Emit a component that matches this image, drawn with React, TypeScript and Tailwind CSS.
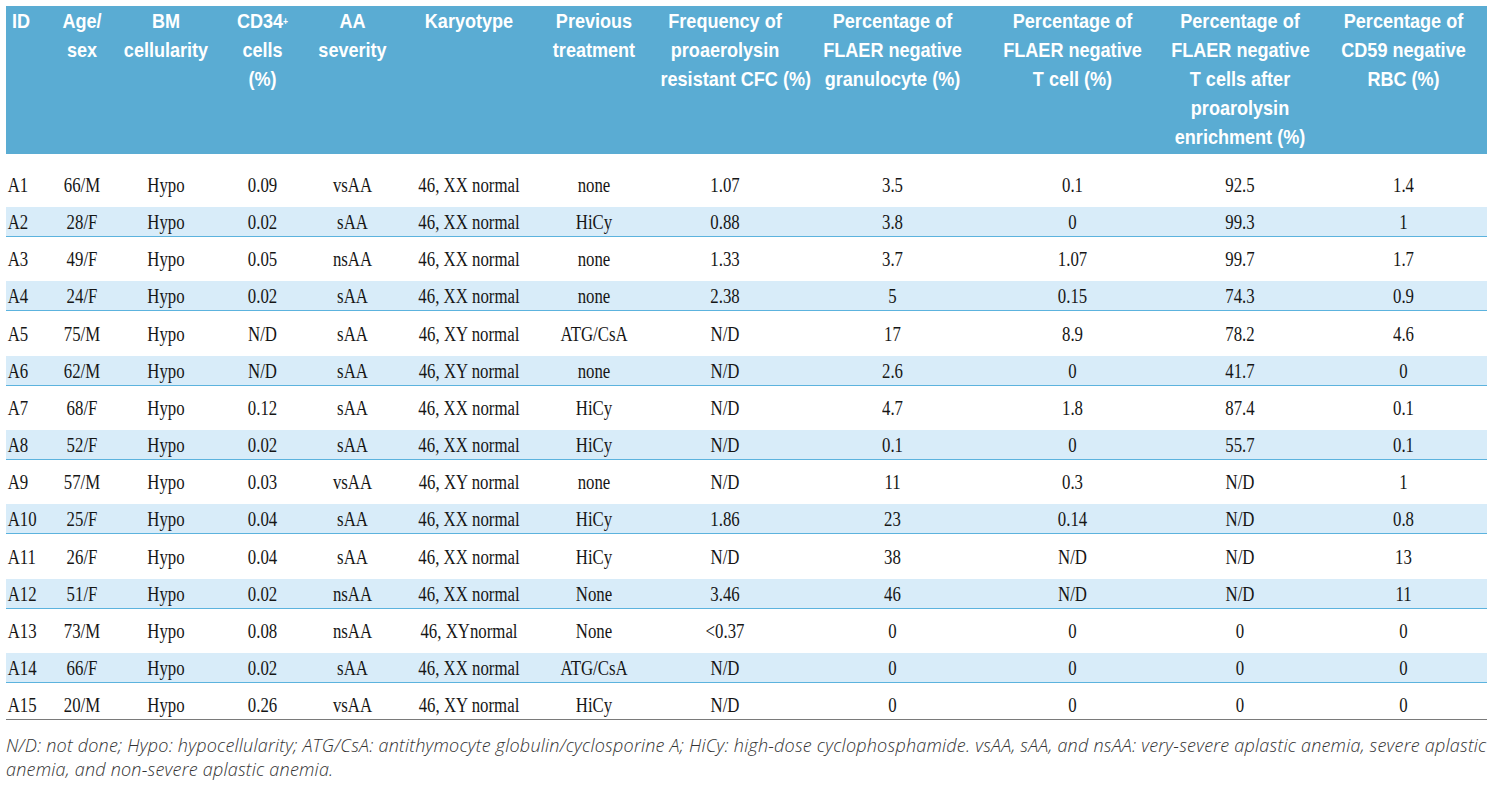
import React from 'react';

const cols = 'grid grid-cols-[46px_60px_108px_85px_95px_138px_112px_150px_185px_175px_160px_167px]';

const headers: React.ReactNode[] = [
  <>ID</>,
  <>Age/<br />sex</>,
  <>BM<br />cellularity</>,
  <>CD34<sup className="text-[10px] relative -top-[3px]">+</sup><br />cells<br />(%)</>,
  <>AA<br />severity</>,
  <>Karyotype</>,
  <>Previous<br />treatment</>,
  <>Frequency of<br />proaerolysin<br />resistant CFC (%)</>,
  <>Percentage of<br />FLAER negative<br />granulocyte (%)</>,
  <>Percentage of<br />FLAER negative<br />T cell (%)</>,
  <>Percentage of<br />FLAER negative<br />T cells after<br />proarolysin<br />enrichment (%)</>,
  <>Percentage of<br />CD59 negative<br />RBC (%)</>,
];

const rows: string[][] = [
  ['A1', '66/M', 'Hypo', '0.09', 'vsAA', '46, XX normal', 'none', '1.07', '3.5', '0.1', '92.5', '1.4'],
  ['A2', '28/F', 'Hypo', '0.02', 'sAA', '46, XX normal', 'HiCy', '0.88', '3.8', '0', '99.3', '1'],
  ['A3', '49/F', 'Hypo', '0.05', 'nsAA', '46, XX normal', 'none', '1.33', '3.7', '1.07', '99.7', '1.7'],
  ['A4', '24/F', 'Hypo', '0.02', 'sAA', '46, XX normal', 'none', '2.38', '5', '0.15', '74.3', '0.9'],
  ['A5', '75/M', 'Hypo', 'N/D', 'sAA', '46, XY normal', 'ATG/CsA', 'N/D', '17', '8.9', '78.2', '4.6'],
  ['A6', '62/M', 'Hypo', 'N/D', 'sAA', '46, XY normal', 'none', 'N/D', '2.6', '0', '41.7', '0'],
  ['A7', '68/F', 'Hypo', '0.12', 'sAA', '46, XX normal', 'HiCy', 'N/D', '4.7', '1.8', '87.4', '0.1'],
  ['A8', '52/F', 'Hypo', '0.02', 'sAA', '46, XX normal', 'HiCy', 'N/D', '0.1', '0', '55.7', '0.1'],
  ['A9', '57/M', 'Hypo', '0.03', 'vsAA', '46, XY normal', 'none', 'N/D', '11', '0.3', 'N/D', '1'],
  ['A10', '25/F', 'Hypo', '0.04', 'sAA', '46, XX normal', 'HiCy', '1.86', '23', '0.14', 'N/D', '0.8'],
  ['A11', '26/F', 'Hypo', '0.04', 'sAA', '46, XX normal', 'HiCy', 'N/D', '38', 'N/D', 'N/D', '13'],
  ['A12', '51/F', 'Hypo', '0.02', 'nsAA', '46, XX normal', 'None', '3.46', '46', 'N/D', 'N/D', '11'],
  ['A13', '73/M', 'Hypo', '0.08', 'nsAA', '46, XYnormal', 'None', '<0.37', '0', '0', '0', '0'],
  ['A14', '66/F', 'Hypo', '0.02', 'sAA', '46, XX normal', 'ATG/CsA', 'N/D', '0', '0', '0', '0'],
  ['A15', '20/M', 'Hypo', '0.26', 'vsAA', '46, XY normal', 'HiCy', 'N/D', '0', '0', '0', '0'],
];

export default function App() {
  return (
    <div className="w-[1494px] h-[788px] bg-white pt-[6px] pl-[6px] overflow-hidden">
      <div className="w-[1481px]">
        {/* header */}
        <div className={`${cols} h-[148px] bg-[#5aacd3] text-white font-bold text-[21px] leading-[29px] font-['Liberation_Sans',Arial,sans-serif]`}>
          {headers.map((h, i) => (
            <div
              key={i}
              className={i === 0 ? 'pl-[7px] text-left origin-left scale-x-[0.86]' : 'text-center whitespace-nowrap scale-x-[0.86]'}
            >
              {h}
            </div>
          ))}
        </div>

        {/* body */}
        <div className="font-['Liberation_Serif',serif] text-[20px] text-[#161616]">
          {rows.map((r, i) => {
            const shaded = i % 2 === 1;
            const last = i === rows.length - 1;
            const h = i === 0 ? 'h-[46px]' : i === 4 || i === 10 ? 'h-[38px]' : 'h-[37px]';
            return (
              <div key={r[0]} className={`${h} flex flex-col justify-end`}>
                <div
                  className={`${cols} h-[30px] items-center ${shaded ? 'bg-[#d8ecf9] border-b border-[#5cb3de]' : ''} ${last ? 'border-b border-[#7a7a7a]' : ''}`}
                >
                  {r.map((c, j) => (
                    <div
                      key={j}
                      className={j === 0 ? 'pl-[2px] text-left origin-left scale-x-[0.84]' : 'text-center whitespace-nowrap scale-x-[0.84]'}
                    >
                      {c}
                    </div>
                  ))}
                </div>
              </div>
            );
          })}
        </div>

        {/* footnote */}
        <div className="pt-[13px] font-['Open_Sans',sans-serif] italic font-light text-[18px] tracking-[0.22px] leading-[24px] text-[#333]">
          <div className="whitespace-nowrap">
            N/D: not done; Hypo: hypocellularity; ATG/CsA: antithymocyte globulin/cyclosporine A; HiCy: high-dose cyclophosphamide. vsAA, sAA, and nsAA: very-severe aplastic anemia, severe aplastic
          </div>
          <div>anemia, and non-severe aplastic anemia.</div>
        </div>
      </div>
    </div>
  );
}
